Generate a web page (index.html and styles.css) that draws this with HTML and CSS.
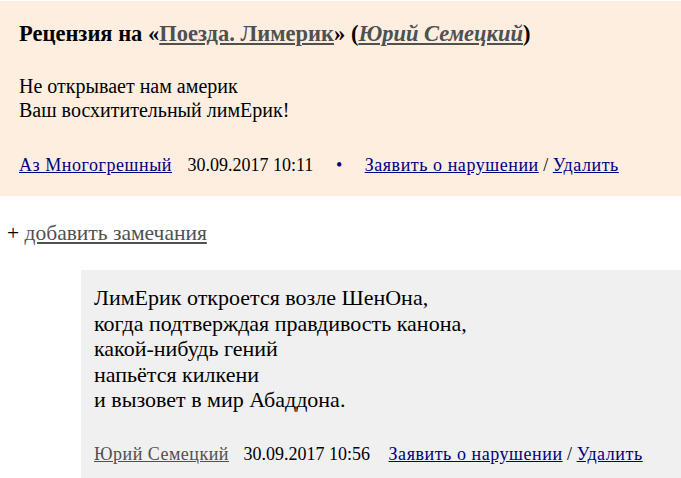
FILE: index.html
```html
<!DOCTYPE html>
<html lang="ru">
<head>
    <meta charset="UTF-8">
    <title>Рецензия</title>
    <link rel="stylesheet" href="styles.css">
</head>
<body>

<div class="review">
    <h2 class="review-title">Рецензия на «<a href="#" class="title-link">Поезда. Лимерик</a>» (<a href="#" class="title-link"><em>Юрий Семецкий</em></a>)</h2>

    <div class="review-text">
        Не открывает нам америк<br>
        Ваш восхитительный лимЕрик!
    </div>

    <div class="meta">
        <a href="#" class="author">Аз Многогрешный</a>
        <span class="date">30.09.2017 10:11</span>
        <span class="dot">•</span>
        <a href="#">Заявить о нарушении</a> / <a href="#">Удалить</a>
    </div>
</div>

<div class="add-note">+ <a href="#">добавить замечания</a></div>

<div class="reply">
    <div class="reply-text">
        ЛимЕрик откроется возле ШенОна,<br>
        когда подтверждая правдивость канона,<br>
        какой-нибудь гений<br>
        напьётся килкени<br>
        и вызовет в мир Абаддона.
    </div>

    <div class="meta">
        <a href="#" class="author grey">Юрий Семецкий</a>
        <span class="date short">30.09.2017 10:56</span>
        <a href="#">Заявить о нарушении</a> / <a href="#">Удалить</a>
    </div>
</div>

</body>
</html>
```

FILE: styles.css
```css
body {
    font-family: "Liberation Serif", "Times New Roman", serif;
    margin: 0;
    padding-top: 1px;
    color: #000;
    background: #fff;
}

a {
    color: #000080;
}

.review {
    background-color: #fdeee0;
    padding: 20px 20px 20px 19px;
}

.review-title {
    font-size: 22.5px;
    font-weight: bold;
    margin: 0 0 27px 0;
}

.title-link {
    color: #505050;
}

.review-text {
    font-size: 20px;
    line-height: 24px;
    margin-bottom: 33px;
}

.meta {
    font-size: 18px;
    color: #000;
}

.meta a {
    letter-spacing: 0.55px;
}

.meta .date {
    margin: 0 18px 0 11px;
}

.meta .date.short {
    margin: 0 14px 0 10px;
}

.meta .dot {
    color: #000080;
    margin-right: 18px;
}

.author.grey {
    color: #505050;
    letter-spacing: 0.5px;
}

.add-note {
    font-size: 21.5px;
    margin: 25px 0 0 7px;
}

.add-note a {
    color: #505050;
}

.reply {
    margin: 24px 0 0 81px;
    background-color: #f0f0f0;
    padding: 15px 13px 14px 13px;
}

.reply-text {
    font-size: 22px;
    line-height: 25.6px;
    margin-bottom: 31px;
}
```
